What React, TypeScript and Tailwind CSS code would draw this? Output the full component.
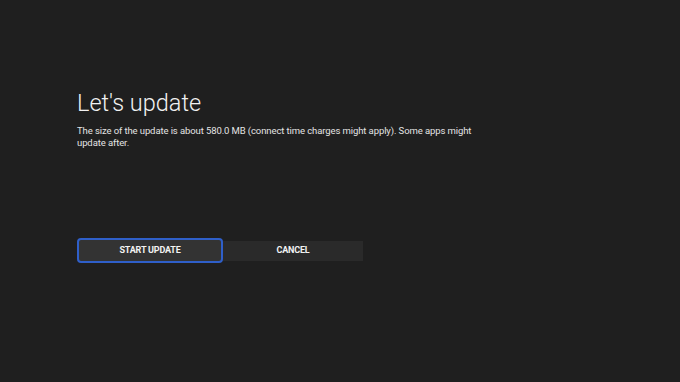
export default function App() {
  return (
    <div
      className="w-[680px] h-[382px] bg-[#1f1f1f] text-white overflow-hidden"
      style={{ fontFamily: "Roboto, 'Open Sans', sans-serif" }}
    >
      <div className="pl-[77px] pt-[90px]">
        <h1 className="text-[23.5px] leading-[27px] font-light text-[#f2f2f2]">
          Let's update
        </h1>
        <p className="mt-[8px] w-[410px] text-[9.5px] leading-[12px] tracking-[-0.1px] text-[#e3e3e3]">
          The size of the update is about 580.0 MB (connect time charges might apply). Some apps might
          update after.
        </p>

        <div className="mt-[89px] flex items-center">
          <button className="w-[146px] h-[25px] rounded-[4px] border-2 border-[#2f5fc9] bg-[#333333] text-[9px] font-bold tracking-[-0.2px] text-[#f2f2f2]">
            START UPDATE
          </button>
          <button className="w-[140px] h-[20px] bg-[#2a2a2a] text-[9px] font-bold tracking-[-0.2px] text-[#f2f2f2]">
            CANCEL
          </button>
        </div>
      </div>
    </div>
  );
}
